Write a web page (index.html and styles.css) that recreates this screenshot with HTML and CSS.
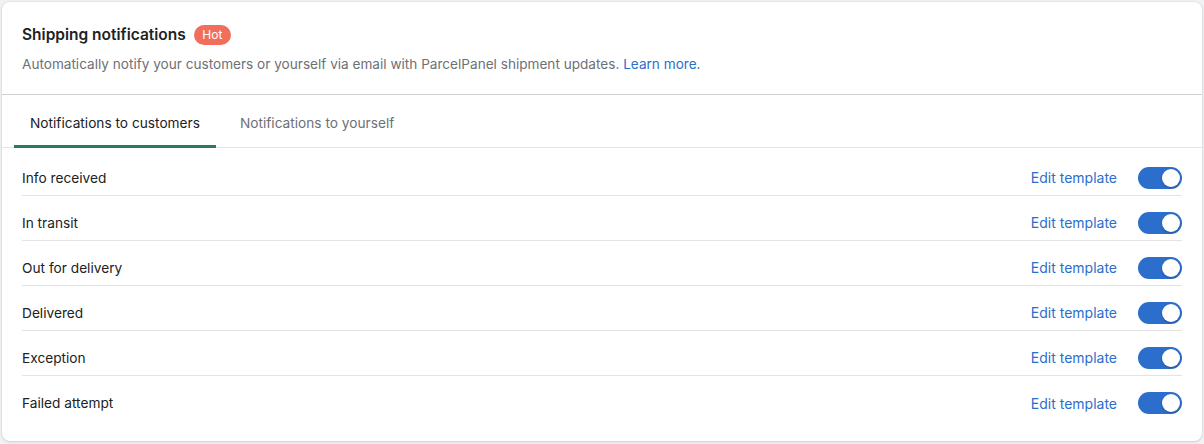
FILE: index.html
```html
<!DOCTYPE html>
<html>
<head lang="en">
    <meta charset="UTF-8">
    <link rel="stylesheet" href="styles.css">
    <title>Shipping notifications</title>
</head>
<body>
<div class="card">
    <div class="card_head">
        <div class="title_row">
            <h2 class="title">Shipping notifications</h2>
            <span class="badge">Hot</span>
        </div>
        <p class="desc">Automatically notify your customers or yourself via email with ParcelPanel shipment updates. <a href="javascript:;">Learn more.</a></p>
    </div>

    <ul class="tabs">
        <li class="tab active">Notifications to customers</li>
        <li class="tab">Notifications to yourself</li>
    </ul>

    <ul class="rows">
        <li class="row">
            <span class="name">Info received</span>
            <a class="edit" href="javascript:;">Edit template</a>
            <span class="toggle"></span>
        </li>
        <li class="row">
            <span class="name">In transit</span>
            <a class="edit" href="javascript:;">Edit template</a>
            <span class="toggle"></span>
        </li>
        <li class="row">
            <span class="name">Out for delivery</span>
            <a class="edit" href="javascript:;">Edit template</a>
            <span class="toggle"></span>
        </li>
        <li class="row">
            <span class="name">Delivered</span>
            <a class="edit" href="javascript:;">Edit template</a>
            <span class="toggle"></span>
        </li>
        <li class="row">
            <span class="name">Exception</span>
            <a class="edit" href="javascript:;">Edit template</a>
            <span class="toggle"></span>
        </li>
        <li class="row">
            <span class="name">Failed attempt</span>
            <a class="edit" href="javascript:;">Edit template</a>
            <span class="toggle"></span>
        </li>
    </ul>
</div>
</body>
</html>
```

FILE: styles.css
```css
* {
    padding: 0;
    margin: 0;
    box-sizing: border-box;
}

body {
    background: #f1f2f3;
    padding: 2px 2px 3px 2px;
    font-family: Inter, "Noto Sans", sans-serif;
    font-size: 14px;
    color: #202223;
}

ul {
    list-style: none;
}

a {
    color: #2c6ecb;
    text-decoration: none;
}

.card {
    width: 1200px;
    background: #fff;
    border-radius: 8px;
    box-shadow: 0 0 0 1px rgba(63, 63, 68, 0.05), 0 1px 3px rgba(63, 63, 68, 0.15);
}

.card_head {
    padding: 21px 20px 20px;
    border-bottom: 1px solid #cfd1d3;
}

.title_row {
    display: flex;
    align-items: center;
    gap: 8px;
    height: 24px;
}

.title {
    font-size: 15.5px;
    font-weight: 600;
    line-height: 24px;
}

.badge {
    background: #f16e5d;
    color: #fff;
    font-size: 12px;
    line-height: 20px;
    height: 20px;
    padding: 0 8.5px;
    border-radius: 10px;
}

.desc {
    margin-top: 7px;
    line-height: 20px;
    font-size: 13.6px;
    color: #6d7175;
}

.tabs {
    display: flex;
    gap: 8px;
    padding: 0 12px;
    border-bottom: 1px solid #e1e3e5;
}

.tab {
    padding: 18px 16px 12px;
    line-height: 20px;
    font-size: 13.7px;
    color: #6d7175;
    border-bottom: 3px solid transparent;
    margin-bottom: -1px;
}

.tab.active {
    color: #202223;
    border-bottom-color: #2a7b5f;
}

.rows {
    padding: 3px 20px 20px;
}

.row {
    display: flex;
    align-items: center;
    height: 45px;
    padding-top: 9px;
    border-bottom: 1px solid #e1e3e5;
}

.row:last-child {
    border-bottom: none;
}

.name {
    flex: 1;
    font-size: 13.7px;
}

.edit {
    font-size: 14px;
    margin-right: 21px;
}

.toggle {
    position: relative;
    width: 44px;
    height: 22px;
    border-radius: 11px;
    background: #2c6ecb;
}

.toggle::after {
    content: "";
    position: absolute;
    right: 2px;
    top: 2px;
    width: 18px;
    height: 18px;
    border-radius: 50%;
    background: #fff;
    box-shadow: 0 1px 2px rgba(0, 0, 0, 0.25);
}
```
